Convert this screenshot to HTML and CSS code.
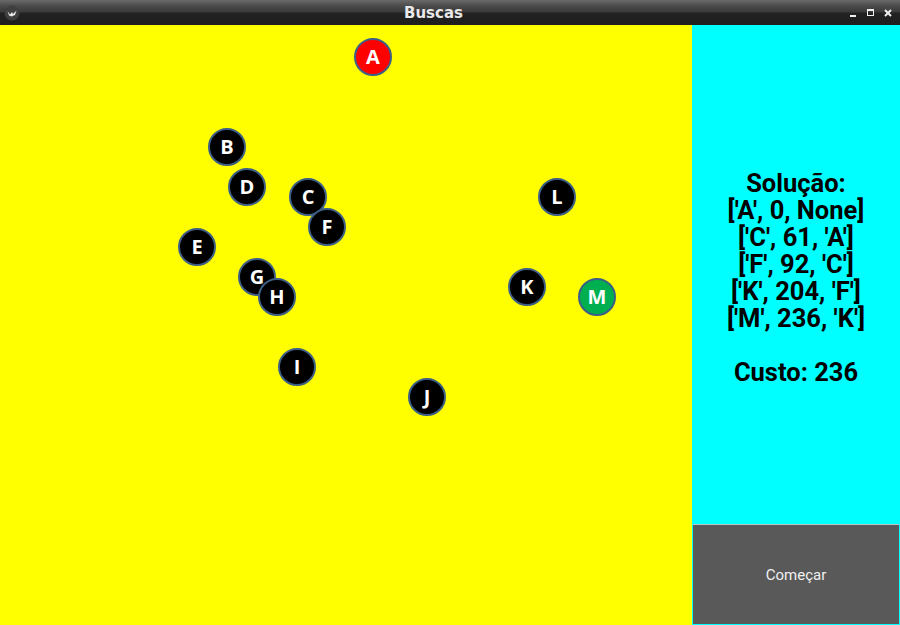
FILE: index.html
```html
<!DOCTYPE html>
<html>
<head>
<meta charset="utf-8">
<link rel="stylesheet" href="styles.css">
</head>
<body>
<div class="window">
  <div class="titlebar">
    <div class="app-icon">
      <svg width="16" height="16" viewBox="0 0 16 16"><circle cx="8" cy="8" r="7.5" fill="#3f3f3f"/><path d="M3.5 6 L6 9.5 L8 7 L9 9 L12.5 5.5 L11 10 L7.5 11.5 L5 10.5 Z" fill="#e8e8e8"/></svg>
    </div>
    <div class="title">Buscas</div>
    <div class="controls">
      <span class="ctl ctl-min"></span>
      <span class="ctl ctl-max"></span>
      <span class="ctl ctl-close">
        <svg width="8" height="8" viewBox="0 0 8 8"><path d="M1 1 L7 7 M7 1 L1 7" stroke="#f0f0f0" stroke-width="2"/></svg>
      </span>
    </div>
  </div>
  <div class="main">
    <div class="canvas">
      <div class="node start" style="left:373px;top:32px">A</div>
      <div class="node" style="left:227px;top:122px">B</div>
      <div class="node" style="left:247px;top:162px">D</div>
      <div class="node" style="left:308px;top:172px">C</div>
      <div class="node" style="left:327px;top:202px">F</div>
      <div class="node" style="left:197px;top:222px">E</div>
      <div class="node" style="left:257px;top:252px">G</div>
      <div class="node" style="left:277px;top:272px">H</div>
      <div class="node" style="left:297px;top:342px">I</div>
      <div class="node" style="left:427px;top:372px">J</div>
      <div class="node" style="left:527px;top:262px">K</div>
      <div class="node" style="left:557px;top:172px">L</div>
      <div class="node goal" style="left:597px;top:272px">M</div>
    </div>
    <div class="sidebar">
      <div class="info">
        <div class="line">Solução:</div>
        <div class="line">['A', 0, None]</div>
        <div class="line">['C', 61, 'A']</div>
        <div class="line">['F', 92, 'C']</div>
        <div class="line">['K', 204, 'F']</div>
        <div class="line">['M', 236, 'K']</div>
        <div class="line blank"></div>
        <div class="line">Custo: 236</div>
      </div>
      <div class="btn">Começar</div>
    </div>
  </div>
</div>
</body>
</html>
```

FILE: styles.css
```css
html, body {
  margin: 0;
  padding: 0;
  width: 900px;
  height: 625px;
  overflow: hidden;
}
.window {
  width: 900px;
  height: 625px;
  display: flex;
  flex-direction: column;
}
.titlebar {
  height: 25px;
  flex: none;
  display: flex;
  align-items: center;
  position: relative;
  background: linear-gradient(to bottom, #6a6a6a 0px, #4a4a4a 6px, #3a3a3a 12px, #222222 13px, #1e1e1e 25px);
}
.app-icon {
  width: 16px;
  height: 16px;
  margin-left: 4px;
  display: flex;
}
.title {
  flex: 1;
  text-align: center;
  color: #e8e8e8;
  font-family: "DejaVu Sans", sans-serif;
  font-weight: bold;
  font-size: 15px;
  padding-right: 2px;
}
.controls {
  display: flex;
  align-items: center;
  gap: 10px;
  margin-right: 8px;
}
.ctl {
  width: 8px;
  height: 8px;
  display: flex;
  align-items: center;
  justify-content: center;
  position: relative;
}
.ctl-min::after {
  content: "";
  position: absolute;
  left: 1px;
  bottom: 0;
  width: 6px;
  height: 2px;
  background: #f0f0f0;
}
.ctl-max {
  box-sizing: border-box;
  width: 7px;
  height: 7px;
  border: 1px solid #f0f0f0;
  border-top-width: 2px;
}
.main {
  flex: 1;
  display: flex;
}
.canvas {
  width: 692px;
  background: #ffff00;
  position: relative;
}
.node {
  position: absolute;
  width: 38px;
  height: 38px;
  margin-left: -19px;
  margin-top: -19px;
  box-sizing: border-box;
  border-radius: 50%;
  border: 2px solid #3d5f86;
  background: #000;
  color: #fff;
  font-family: "Open Sans", sans-serif;
  font-weight: bold;
  font-size: 20px;
  display: flex;
  align-items: center;
  justify-content: center;
  line-height: 1;
}
.node.start {
  background: #ff0000;
}
.node.goal {
  background: #00b050;
}
.sidebar {
  width: 208px;
  background: #00ffff;
  display: flex;
  flex-direction: column;
}
.info {
  flex: 1;
  display: flex;
  flex-direction: column;
  justify-content: center;
  align-items: center;
  font-family: Roboto, sans-serif;
  font-weight: bold;
  font-size: 25.5px;
  color: #000;
  padding-top: 6px;
}
.line {
  height: 27px;
  line-height: 27px;
  white-space: pre;
}
.btn {
  height: 99px;
  margin: 0 1px 1px 1px;
  background: #595959;
  border-top: 1px solid #b8c8c8;
  color: #f0f0f0;
  font-family: Roboto, sans-serif;
  font-size: 15px;
  display: flex;
  align-items: center;
  justify-content: center;
}
```
